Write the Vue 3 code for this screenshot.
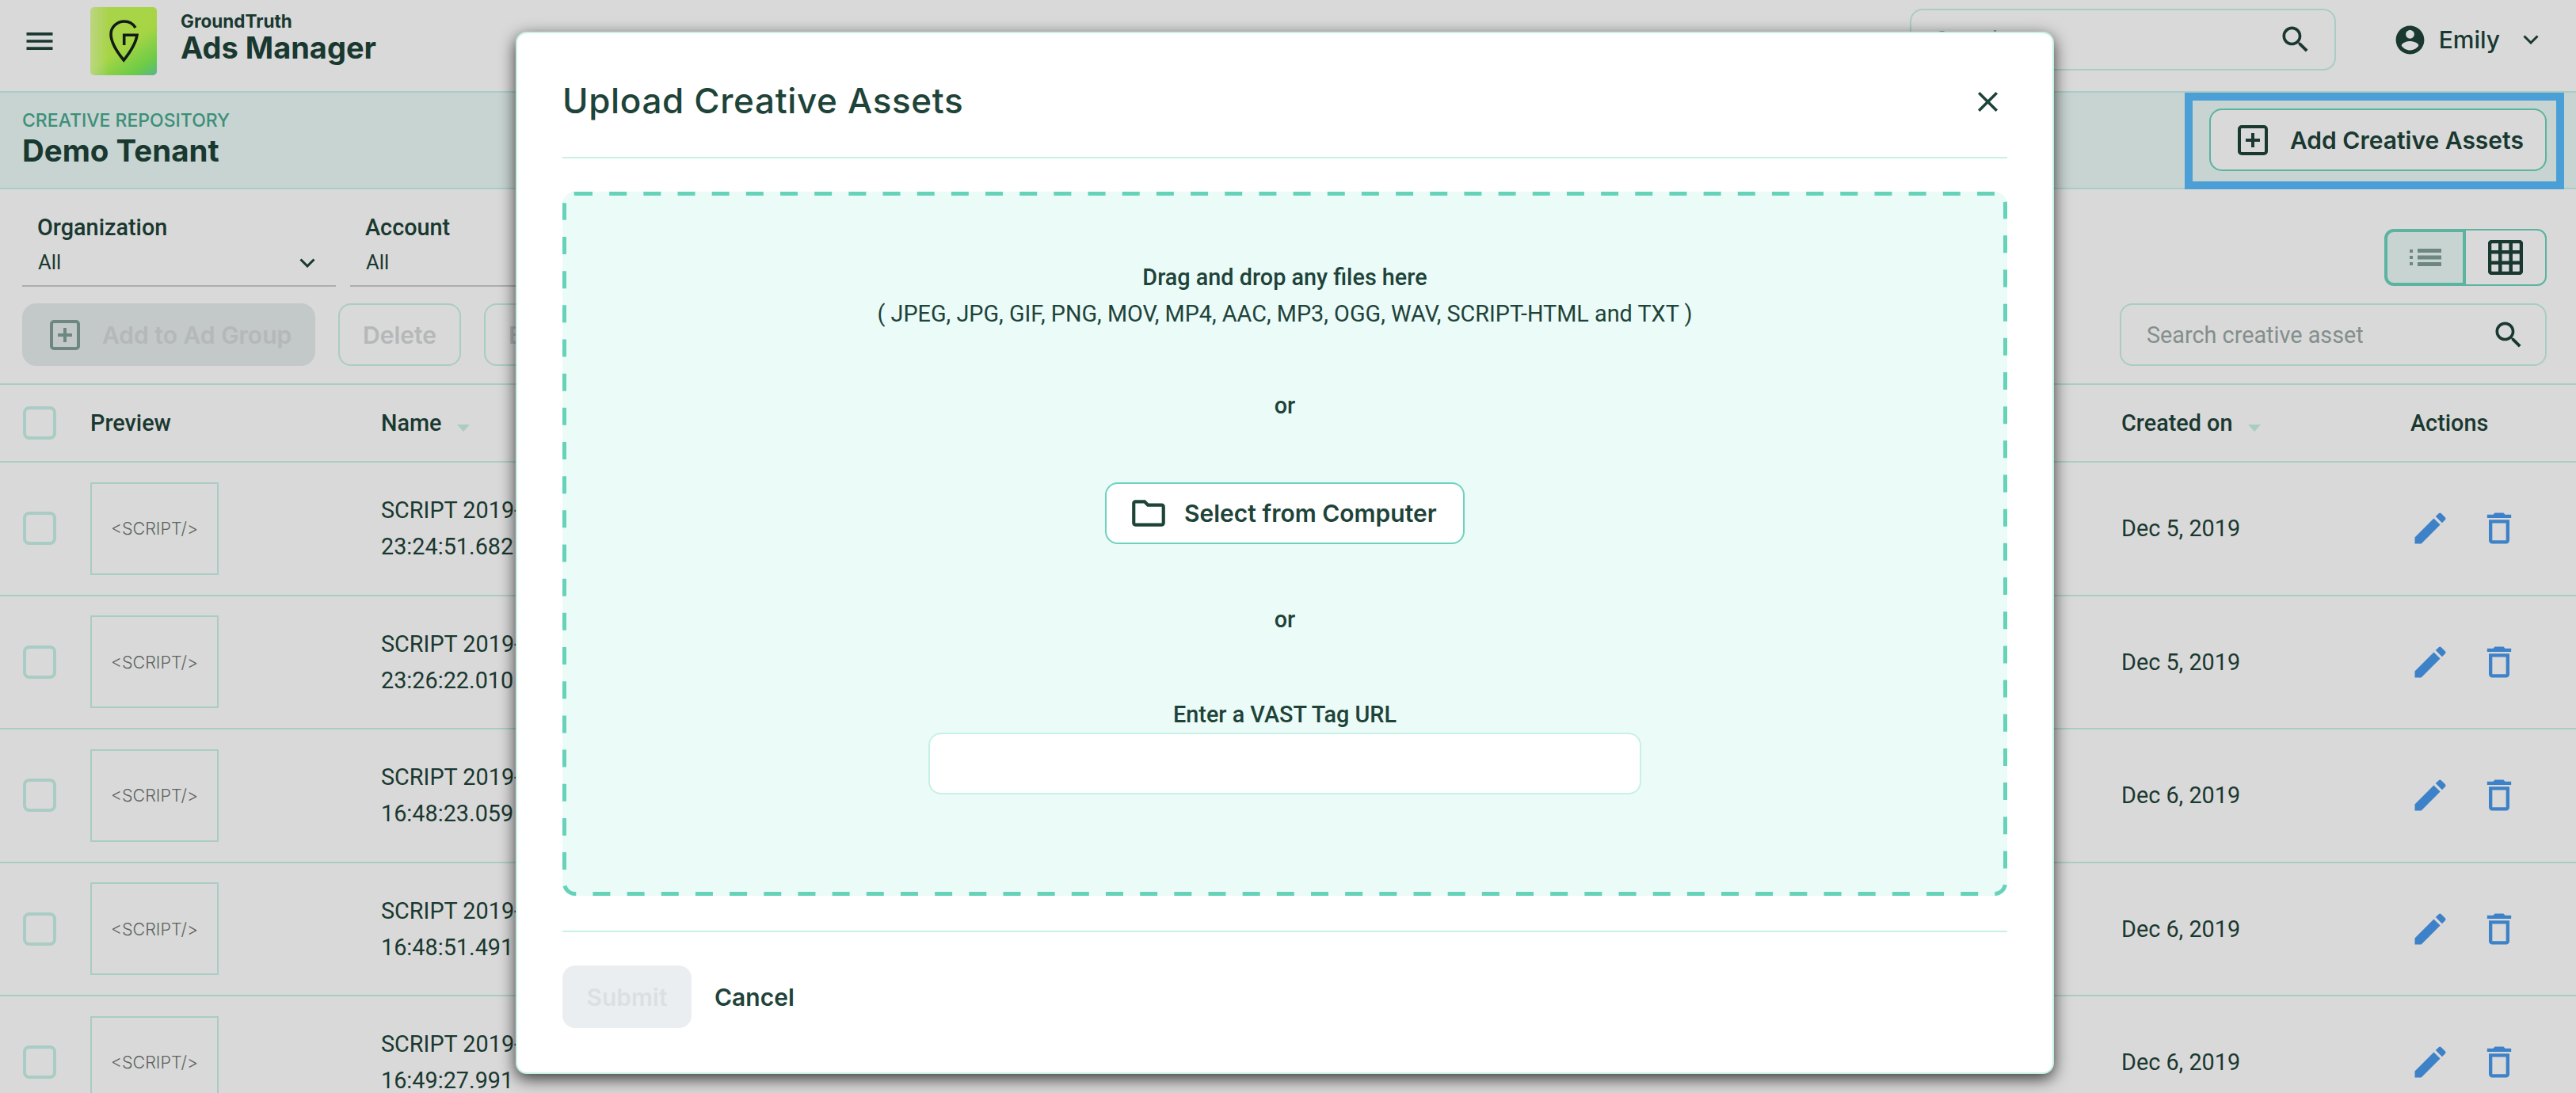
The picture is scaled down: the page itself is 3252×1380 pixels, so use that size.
<template>
  <div class="page">
    <header class="topbar">
      <svg class="menu-icon" viewBox="0 0 24 24"><path d="M3 18h18v-2H3v2zm0-5h18v-2H3v2zm0-7v2h18V6H3z" /></svg>
      <div class="logo">
        <svg viewBox="0 0 37 54" width="37" height="54" fill="none" stroke="#14201c" stroke-width="3.600">
          <path d="M33 10C30 5 25 2 19 2 9.500 2 2 9.500 2 18c0 10 8 23 16.300 33C27 40 33.500 30 35 19.300H18.700V32" />
        </svg>
      </div>
      <div class="brand">
        <div class="brand-top">GroundTruth</div>
        <div class="brand-name">Ads Manager</div>
      </div>
      <div class="top-search">
        <span class="placeholder">Search</span>
        <svg class="search-icon" viewBox="0 0 24 24"><path :d="searchPath" /></svg>
      </div>
      <div class="user">
        <svg class="user-icon" viewBox="0 0 24 24"><path d="M12 2C6.480 2 2 6.480 2 12s4.480 10 10 10 10-4.480 10-10S17.520 2 12 2zm0 3c1.660 0 3 1.340 3 3s-1.340 3-3 3-3-1.340-3-3 1.340-3 3-3zm0 14.200c-2.500 0-4.710-1.280-6-3.220.03-1.990 4-3.080 6-3.080 1.990 0 5.970 1.090 6 3.080-1.290 1.940-3.500 3.220-6 3.220z" /></svg>
        <span>Emily</span>
        <svg class="chev" viewBox="0 0 20 12"><path d="M1.500 1.500 10 10l8.500-8.500" /></svg>
      </div>
    </header>

    <section class="banner">
      <div>
        <div class="crumb">CREATIVE REPOSITORY</div>
        <div class="tenant">Demo Tenant</div>
      </div>
      <div class="highlight">
        <button class="btn add-assets">
          <svg class="plus-box" viewBox="0 0 38 38"><rect x="2" y="2" width="34" height="34" rx="3" /><path d="M19 10v18M10 19h18" /></svg>
          Add Creative Assets
        </button>
      </div>
    </section>

    <section class="filters">
      <div class="filter-list">
        <div class="filter">
          <label>Organization</label>
          <div class="filter-value">All <svg class="chev small" viewBox="0 0 20 12"><path d="M1.500 1.500 10 10l8.500-8.500" /></svg></div>
        </div>
        <div class="filter">
          <label>Account</label>
          <div class="filter-value">All</div>
        </div>
      </div>
      <div class="view-toggle">
        <div class="view active">
          <svg width="40" height="24" viewBox="0 0 40 24"><path d="M0 2h4v4H0zM0 10h4v4H0zM0 18h4v4H0zM10 1h30v5H10zM10 9.500h30v5H10zM10 18h30v5H10z" /></svg>
        </div>
        <div class="view">
          <svg width="44" height="44" viewBox="0 0 44 44" fill="none" stroke="#1e4339" stroke-width="4.500"><rect x="2" y="2" width="40" height="40" rx="3" /><path d="M15.300 2v40M28.700 2v40M2 15.300h40M2 28.700h40" /></svg>
        </div>
      </div>
    </section>

    <section class="toolbar">
      <button class="btn add-group" disabled>
        <svg class="plus-box" viewBox="0 0 38 38"><rect x="2" y="2" width="34" height="34" rx="3" /><path d="M19 10v18M10 19h18" /></svg>
        Add to Ad Group
      </button>
      <button class="btn ghost" disabled>Delete</button>
      <button class="btn ghost" disabled>Bulk Edit</button>
      <div class="asset-search">
        <span class="placeholder">Search creative asset</span>
        <svg class="search-icon" viewBox="0 0 24 24"><path :d="searchPath" /></svg>
      </div>
    </section>

    <section class="table">
      <div class="row head">
        <div><span class="check"></span></div>
        <div>Preview</div>
        <div>Name <i class="sort"></i></div>
        <div>Created on <i class="sort"></i></div>
        <div>Actions</div>
      </div>
      <div v-for="row in rows" :key="row.time" class="row">
        <div><span class="check"></span></div>
        <div><div class="preview">&lt;SCRIPT/&gt;</div></div>
        <div class="name">{{ row.name }}<br />{{ row.time }}</div>
        <div>{{ row.created }}</div>
        <div class="actions">
          <svg class="action-icon" viewBox="0 0 24 24"><path d="M3 17.250V21h3.750L17.810 9.940l-3.750-3.750L3 17.250zM20.710 7.040c.39-.39.39-1.020 0-1.410l-2.340-2.340c-.39-.39-1.020-.39-1.410 0l-1.830 1.830 3.750 3.750 1.830-1.830z" /></svg>
          <svg class="action-icon" viewBox="0 0 24 24"><path d="M6 19c0 1.100.9 2 2 2h8c1.100 0 2-.9 2-2V7H6v12zM8 9h8v10H8V9zm7.500-5l-1-1h-5l-1 1H5v2h14V4z" /></svg>
        </div>
      </div>
    </section>

    <div class="overlay">
      <div class="modal">
        <div class="modal-head">
          <h2>Upload Creative Assets</h2>
          <svg class="close" viewBox="0 0 24 24"><path d="M19 6.410L17.590 5 12 10.590 6.410 5 5 6.410 10.590 12 5 17.590 6.410 19 12 13.410 17.590 19 19 17.590 13.410 12z" /></svg>
        </div>
        <div class="drop">
          <svg class="dashes" width="100%" height="100%"><rect width="100%" height="100%" rx="16" fill="none" stroke="#66d3b9" stroke-width="10" stroke-dasharray="22 21.170" /></svg>
          <strong>Drag and drop any files here</strong>
          <span>( JPEG, JPG, GIF, PNG, MOV, MP4, AAC, MP3, OGG, WAV, SCRIPT-HTML and TXT )</span>
          <strong class="or first">or</strong>
          <button class="btn select">
            <svg class="folder" viewBox="0 0 24 24"><path d="M9.170 6l2 2H20v10H4V6h5.170M10 4H4c-1.100 0-1.990.9-1.990 2L2 18c0 1.100.9 2 2 2h16c1.100 0 2-.9 2-2V8c0-1.100-.9-2-2-2h-8l-2-2z" /></svg>
            Select from Computer
          </button>
          <strong class="or">or</strong>
          <strong class="vast">Enter a VAST Tag URL</strong>
          <input class="vast-input" type="text" />
        </div>
        <div class="modal-foot">
          <button class="btn submit" disabled>Submit</button>
          <button class="btn cancel">Cancel</button>
        </div>
      </div>
    </div>
  </div>
</template>

<script setup>
const searchPath = 'M15.500 14h-.79l-.28-.27C15.410 12.590 16 11.110 16 9.500 16 5.910 13.090 3 9.500 3S3 5.910 3 9.500 5.910 16 9.500 16c1.610 0 3.090-.59 4.230-1.570l.27.28v.79l5 4.990L20.490 19l-4.990-5zm-6 0C7.010 14 5 11.990 5 9.500S7.010 5 9.500 5 14 7.010 14 9.500 11.990 14 9.500 14z'

const rows = [
  { name: 'SCRIPT 2019-12-05', time: '23:24:51.682', created: 'Dec 5, 2019' },
  { name: 'SCRIPT 2019-12-05', time: '23:26:22.010', created: 'Dec 5, 2019' },
  { name: 'SCRIPT 2019-12-06', time: '16:48:23.059', created: 'Dec 6, 2019' },
  { name: 'SCRIPT 2019-12-06', time: '16:48:51.491', created: 'Dec 6, 2019' },
  { name: 'SCRIPT 2019-12-06', time: '16:49:27.991', created: 'Dec 6, 2019' }
]
</script>

<style>
html, body { margin: 0; overflow: hidden; background: #fff; }
</style>

<style scoped>
.page {
  position: relative;
  width: 3252px;
  height: 1380px;
  overflow: hidden;
  background: #fff;
  color: #1e4339;
  font-family: Roboto, sans-serif;
  font-size: 28.800px;
}
.btn {
  display: flex;
  align-items: center;
  height: 79px;
  box-sizing: border-box;
  background: #fff;
  border: 2px solid #c7f0e7;
  border-radius: 16px;
  color: #1e4339;
  font-family: Inter, sans-serif;
  font-size: 30px;
  font-weight: 600;
  padding: 0;
}
svg { display: block; flex: none; }

.topbar {
  display: flex;
  align-items: center;
  height: 115px;
  box-sizing: border-box;
  padding: 0 47px 12px 28px;
}
.menu-icon { width: 44px; height: 44px; fill: #1e4339; margin-right: 42px; }
.logo {
  width: 84px;
  height: 86px;
  display: flex;
  align-items: center;
  justify-content: center;
  border-radius: 5px;
  background:
    linear-gradient(90deg, rgba(255, 255, 255, 0.4), rgba(255, 255, 255, 0) 28%),
    linear-gradient(145deg, #c8f858 0%, #c4fb50 55%, #7fef55 84%, #68d5a5 100%);
  margin-right: 30px;
}
.brand { margin-top: -11px; }
.brand-top { font: 700 22.500px/28px Inter, sans-serif; }
.brand-name { font: 700 38px/38px Inter, sans-serif; }
.top-search {
  display: flex;
  align-items: center;
  justify-content: space-between;
  box-sizing: border-box;
  width: 538px;
  height: 78px;
  margin-left: auto;
  margin-top: -3px;
  padding: 0 30px;
  border: 2px solid #c7f0e7;
  border-radius: 16px;
}
.placeholder { color: #9aa8a4; }
.search-icon { width: 44px; height: 44px; fill: #1e4339; margin-right: -3px; }
.user {
  display: flex;
  align-items: center;
  margin-left: 72px;
  margin-top: -3px;
  font: 500 30px Inter, sans-serif;
}
.user-icon { width: 43px; height: 43px; fill: #1e4339; margin-right: 15px; }
.chev { width: 20px; height: 12px; fill: none; stroke: #1e4339; stroke-width: 3; margin-left: 29px; }

.banner {
  display: flex;
  justify-content: space-between;
  align-items: stretch;
  box-sizing: border-box;
  height: 124px;
  padding: 0 15px 0 28px;
  background: #ebf9f6;
  border-top: 2px solid #c7f0e7;
  border-bottom: 2px solid #c7f0e7;
}
.crumb {
  margin-top: 20px;
  font: 500 23px/30px Inter, sans-serif;
  color: #48a88e;
}
.tenant { font: 700 38.500px/44px Inter, sans-serif; margin-top: 1px; }
.highlight {
  box-sizing: border-box;
  width: 479px;
  height: 122px;
  padding: 10px 12px 0 21px;
  border: 10px solid #58bcfc;
}
.add-assets {
  width: 100%;
  padding-left: 34px;
  border-color: #6bd3bc;
  background: #fff;
  gap: 28px;
}
.plus-box { width: 38px; height: 38px; fill: none; stroke: #1e4339; stroke-width: 4; }

.filters {
  display: flex;
  justify-content: space-between;
  align-items: flex-end;
  padding: 26px 37px 0 28px;
}
.filter-list { display: flex; gap: 18px; }
.filter { width: 396px; }
.filter label { display: block; padding-left: 19px; font-weight: 500; line-height: 44px; }
.filter-value {
  display: flex;
  justify-content: space-between;
  height: 51px;
  padding: 0 26px 0 20px;
  border-bottom: 2px solid #c9cdcc;
  font-size: 25.600px;
  line-height: 44px;
}
.chev.small { margin-top: 17px; }
.view-toggle { display: flex; height: 72px; margin-bottom: 1px; }
.view {
  display: flex;
  align-items: center;
  justify-content: center;
  box-sizing: border-box;
  width: 102px;
  border: 2px solid #6bd3bc;
  border-left: 0;
  border-radius: 0 12px 12px 0;
}
.view.active {
  width: 103px;
  border: 4px solid #6bd3bc;
  border-radius: 12px 0 0 12px;
  background: #ebf9f6;
  fill: #82a096;
}

.toolbar {
  display: flex;
  align-items: center;
  gap: 29px;
  margin-top: 21px;
  padding: 0 37px 0 28px;
}
.add-group {
  width: 370px;
  padding-left: 35px;
  gap: 28px;
  background: #e5ebec;
  border: 0;
  color: #d5d9da;
  border-radius: 18px;
}
.add-group .plus-box { stroke: #82a096; }
.ghost { padding: 0 29px; color: #d5d9da; }
.asset-search {
  display: flex;
  align-items: center;
  justify-content: space-between;
  box-sizing: border-box;
  width: 539px;
  height: 79px;
  margin-left: auto;
  padding: 0 30px 0 32px;
  border: 2px solid #c7f0e7;
  border-radius: 16px;
}
.asset-search .search-icon { margin-right: -6px; }

.table { margin-top: 22px; border-top: 2px solid #c7f0e7; }
.row {
  display: grid;
  grid-template-columns: 114px 367px 2197px 365px 1fr;
  align-items: center;
  box-sizing: border-box;
  height: 168.500px;
  border-bottom: 2px solid #c7f0e7;
  line-height: 46px;
}
.row.head { height: 98px; font-weight: 500; }
.row > :first-child { padding-left: 29px; }
.check {
  display: block;
  box-sizing: border-box;
  width: 42px;
  height: 42px;
  border: 4px solid #c7f0e7;
  border-radius: 8px;
}
.sort {
  display: inline-block;
  margin-left: 12px;
  vertical-align: -1px;
  border-left: 8px solid transparent;
  border-right: 8px solid transparent;
  border-top: 9px solid #c7f0e7;
}
.preview {
  display: flex;
  align-items: center;
  justify-content: center;
  box-sizing: border-box;
  width: 162px;
  height: 117px;
  border: 2px solid #c7f0e7;
  font: 300 21.500px Inter, sans-serif;
  color: #6e7573;
}
.name { white-space: nowrap; }
.actions { display: flex; margin-left: -1px; }
.action-icon { width: 52px; height: 52px; fill: #4899eb; }
.actions .action-icon + .action-icon { margin-left: 35px; }

.overlay {
  position: absolute;
  inset: 0;
  background: rgba(0, 0, 0, 0.15);
}
.modal {
  position: absolute;
  left: 651px;
  top: 40px;
  width: 1942px;
  height: 1316px;
  box-sizing: border-box;
  padding: 0 57px;
  background: #fff;
  border: 2px solid #c7f0e7;
  border-radius: 14px;
  box-shadow: 0 6px 20px rgba(0, 0, 0, 0.75);
}
.modal-head {
  display: flex;
  align-items: center;
  justify-content: space-between;
  box-sizing: border-box;
  height: 158px;
  padding-top: 14px;
  border-bottom: 2px solid #c7f0e7;
}
.modal-head h2 { margin: 0; font: 500 44px Inter, sans-serif; letter-spacing: 0.650px; }
.close { width: 43px; height: 43px; fill: #1e4339; margin-right: 3px; margin-top: 2px; }
.drop {
  position: relative;
  display: flex;
  flex-direction: column;
  align-items: center;
  box-sizing: border-box;
  height: 889px;
  margin-top: 42px;
  padding-top: 85px;
  background: #ebfbf8;
  border-radius: 16px;
  line-height: 46px;
  overflow: hidden;
}
.dashes { position: absolute; left: 0; top: 0; }
.drop strong { position: relative; font-weight: 500; }
.drop .or { margin-top: 72px; }
.drop .or.first { margin-top: 70px; }
.select {
  position: relative;
  width: 454px;
  height: 78px;
  flex: none;
  margin-top: 74px;
  padding-left: 28px;
  gap: 20px;
  border-color: #6bd3bc;
}
.folder { width: 50px; height: 50px; fill: #1e4339; }
.drop .vast { margin-top: 74px; }
.vast-input {
  position: relative;
  flex: none;
  width: 900px;
  height: 78px;
  box-sizing: border-box;
  background: #fff;
  border: 2px solid #c7f0e7;
  border-radius: 16px;
}
.modal-foot {
  display: flex;
  align-items: center;
  gap: 29px;
  margin-top: 44px;
  padding-top: 42px;
  border-top: 2px solid #c7f0e7;
}
.submit {
  justify-content: center;
  width: 163px;
  background: #ebeef0;
  border: 0;
  color: #dcdfe1;
}
.cancel { background: none; border: 0; }
</style>
